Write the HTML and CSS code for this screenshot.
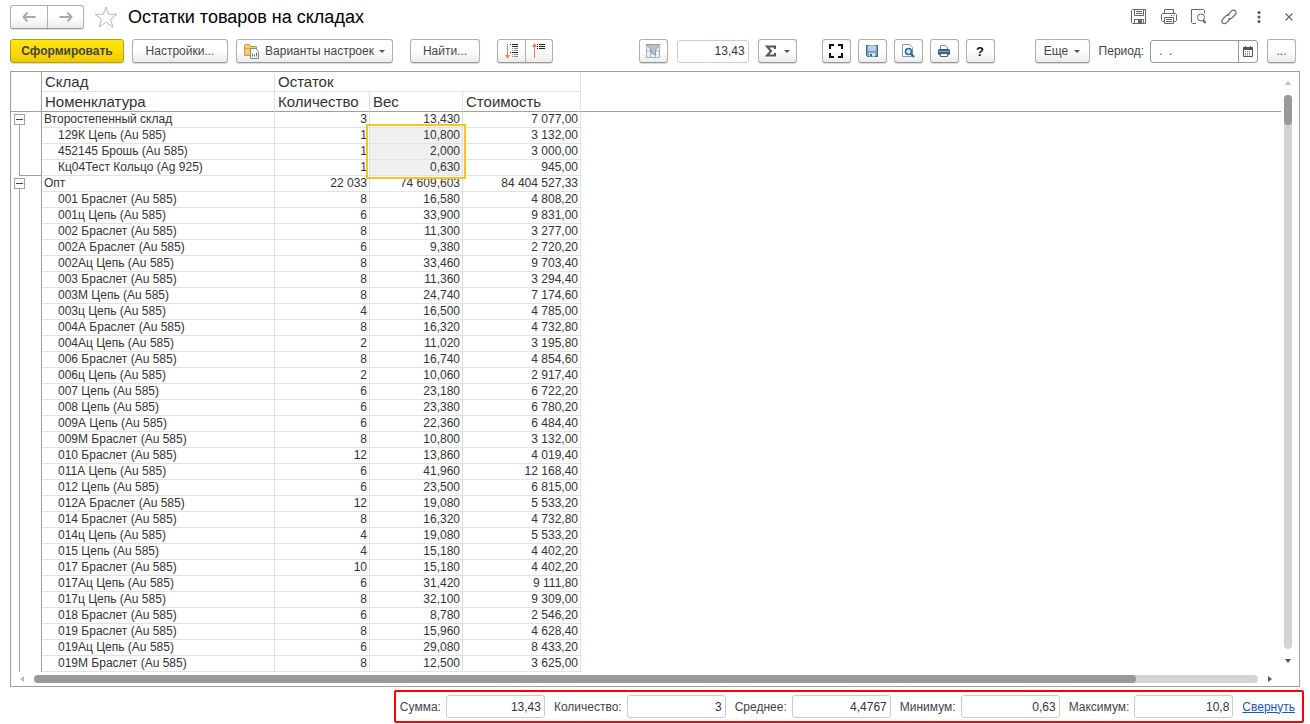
FILE: index.html
```html
<!DOCTYPE html>
<html lang="ru">
<head>
  <meta charset="UTF-8">
  <meta name="viewport" content="width=device-width, initial-scale=1.0">
  <title>Остатки товаров на складах</title>
  <link rel="stylesheet" href="styles.css">
</head>
<body>
  <div class="header">
    <div class="btn-pair nav">
      <button class="btn" type="button" aria-label="Назад">
        <svg width="14" height="10" viewBox="0 0 14 10"><path d="M5.500 0.500L1.500 5l4 4.500M2 5h11.500" fill="none" stroke="#aaa" stroke-width="2"/></svg>
      </button>
      <button class="btn" type="button" aria-label="Вперед">
        <svg width="14" height="10" viewBox="0 0 14 10"><path d="M8.500 0.500l4 4.500-4 4.500M12 5H0.500" fill="none" stroke="#aaa" stroke-width="2"/></svg>
      </button>
    </div>
    <button class="icon-btn star" type="button" aria-label="Избранное">
      <svg width="24" height="22" viewBox="0 0 24 22"><path d="M12 1l2.700 7.300H23l-6.600 4.900 2.500 7.800-6.900-4.800L5.100 21l2.500-7.800L1 8.300h8.300z" fill="none" stroke="#b4bac2"/></svg>
    </button>
    <h1>Остатки товаров на складах</h1>
    <div class="window-tools">
      <button class="icon-btn" type="button" aria-label="Сохранить">
        <svg width="16" height="16" viewBox="0 0 16 16" fill="none" stroke="#666"><path d="M0.500 1.500l1-1h13v14h-13l-1-1z"/><path d="M3.500 0.500v6h9v-6M5 2.500h6M5 4.500h6M3.500 14.500v-4h9v4"/><path d="M7 11h4v3H7z" fill="#666" stroke="none"/></svg>
      </button>
      <button class="icon-btn" type="button" aria-label="Печать">
        <svg width="16" height="16" viewBox="0 0 16 16" fill="none" stroke="#666"><path d="M3.500 4V0.500h9V4M3.500 12.500h-2l-1-1v-6l1-1h13l1 1v6l-1 1h-2"/><path d="M3.500 8.500h9v6h-9zM5 10.500h6M5 12.500h6M10 6.500h1M12.500 6.500h1"/></svg>
      </button>
      <button class="icon-btn" type="button" aria-label="Предварительный просмотр">
        <svg width="16" height="16" viewBox="0 0 16 16" fill="none" stroke="#666"><path d="M5 14.500H1.500l-1-1v-13h12l1 1v3"/><circle cx="10" cy="8.500" r="3.500"/><path d="M12 11l2.500 3" stroke-width="2"/></svg>
      </button>
      <button class="icon-btn" type="button" aria-label="Получить ссылку">
        <svg width="16" height="16" viewBox="0 0 16 16" fill="none" stroke="#666" stroke-width="1.200"><path d="M6.300 6.300l4.400-4.400a2.500 2.500 0 0 1 3.600 0 2.500 2.500 0 0 1 0 3.600L10.700 9.100a2.600 2.600 0 0 1-3.300 0.300"/><path d="M9.500 9.500l-4.300 4.300a2.500 2.500 0 0 1-3.600 0 2.500 2.500 0 0 1 0-3.600L5.200 6.600a2.600 2.600 0 0 1 3.300-0.300"/></svg>
      </button>
      <button class="icon-btn" type="button" aria-label="Меню">
        <svg width="16" height="16" viewBox="0 0 16 16" fill="#555"><circle cx="8" cy="3.500" r="1.500"/><circle cx="8" cy="8" r="1.500"/><circle cx="8" cy="12.500" r="1.500"/></svg>
      </button>
      <button class="icon-btn" type="button" aria-label="Закрыть">
        <svg width="16" height="16" viewBox="0 0 16 16"><path d="M4.500 4.500l7 7M11.500 4.500l-7 7" stroke="#666" stroke-width="1.200"/></svg>
      </button>
    </div>
  </div>

  <div class="toolbar">
    <div class="group">
      <button class="btn btn-primary" type="button">Сформировать</button>
      <button class="btn btn-settings" type="button">Настройки...</button>
      <button class="btn btn-variants" type="button">
        <svg width="16" height="16" viewBox="0 0 16 16"><path d="M0.500 12.500v-10l1-1h4l1 2h6v9z" fill="#f4cd70" stroke="#c79a35"/><path d="M1 5.500h11" stroke="#d8ab48"/><path d="M6.500 5.500h5l3 3v7h-8z" fill="#fff" stroke="#808890"/><path d="M8.500 13.500v-3" stroke="#4b8b43"/><path d="M10.500 13.500v-2" stroke="#3c70b5"/><path d="M12.500 13.500v-4" stroke="#d6492f"/></svg>
        <span>Варианты настроек</span>
        <i class="caret"></i>
      </button>
    </div>
    <button class="btn btn-find" type="button">Найти...</button>
    <div class="btn-pair sort">
      <button class="btn" type="button" aria-label="Развернуть группы">
        <svg width="14" height="16" viewBox="0 0 14 16"><path d="M2.500 1v13" stroke="#f08040"/><path d="M0 12h5l-2.500 3.500z" fill="#f08040"/><path d="M5 1.500h1M7 1.500h6M5 9.500h1M7 9.500h6M7 3.500h6" stroke="#222"/><path d="M7 5.500h1M9 5.500h4M7 7.500h1M9 7.500h4M7 11.500h1M9 11.500h4M7 13.500h1M9 13.500h4" stroke="#888"/></svg>
      </button>
      <button class="btn" type="button" aria-label="Свернуть группы">
        <svg width="14" height="16" viewBox="0 0 14 16"><path d="M2.500 2v13" stroke="#f08040"/><path d="M0 4h5L2.500 0z" fill="#f08040"/><path d="M5 1.500h1M7 1.500h6M5 3.500h1M7 3.500h6M5 5.500h1M7 5.500h6" stroke="#222"/></svg>
      </button>
    </div>
    <div class="group calc">
      <button class="btn btn-square" type="button" aria-label="Отбор">
        <svg width="16" height="16" viewBox="0 0 16 16"><path d="M1.500 3.500h13v11h-13zM1.500 8h13M5.500 3.500v11M10.500 3.500v11" fill="#eef1f4" stroke="#a9b3bd"/><path d="M1 1.500h14L10.500 7v5L6.500 10V7z" fill="#b7c2cd" stroke="#909eac"/></svg>
      </button>
      <input class="field sum-field" type="text" value="13,43" aria-label="Сумма выделенных">
      <button class="btn btn-sigma" type="button" aria-label="Функции расчета">
        <svg width="12" height="12" viewBox="0 0 12 12"><path d="M10 4V1.500H2L6 6l-4 4.500h8V8" fill="none" stroke="#555" stroke-width="2"/></svg>
        <i class="caret"></i>
      </button>
    </div>
    <div class="group actions">
      <button class="btn btn-square" type="button" aria-label="На весь экран">
        <svg width="14" height="14" viewBox="0 0 14 14"><path d="M1 5V1h4M9 1h4v4M13 9v4H9M5 13H1V9" fill="none" stroke="#111" stroke-width="2"/></svg>
      </button>
      <button class="btn btn-square" type="button" aria-label="Сохранить отчет">
        <svg width="14" height="14" viewBox="0 0 14 14"><path d="M1.500 1.500h11v11h-10l-1-1z" fill="#78a2cc" stroke="#38658f"/><path d="M3.500 1.500h7v5h-7z" fill="#f4f8fb"/><path d="M4 3h6M4 5h6" stroke="#8ba8c4"/><path d="M4 9h6v3.500H4z" fill="#dce8f2"/><path d="M5 10h2v2.500H5z" fill="#38658f"/></svg>
      </button>
      <button class="btn btn-square" type="button" aria-label="Просмотр">
        <svg width="14" height="14" viewBox="0 0 14 14"><path d="M1.500 0.500h7l3 3v9h-10z" fill="#fff" stroke="#8b969f"/><circle cx="7.500" cy="7.500" r="3" fill="#d9eaf7" stroke="#246a9e" stroke-width="1.600"/><path d="M9.700 9.700l3.300 3.300" stroke="#246a9e" stroke-width="2"/></svg>
      </button>
      <button class="btn btn-square" type="button" aria-label="Печать отчета">
        <svg width="14" height="14" viewBox="0 0 14 14"><path d="M3.500 5.500v-4h5l2 2v2" fill="#fff" stroke="#7d8b99"/><rect x="1" y="5" width="12" height="6" rx="1.500" fill="#416181"/><path d="M2 7.500h10" stroke="#89a5bf"/><path d="M3.500 9.500h7v3h-7z" fill="#fff" stroke="#416181"/></svg>
      </button>
      <button class="btn btn-square btn-help" type="button" aria-label="Справка">?</button>
    </div>
    <div class="group period">
      <button class="btn btn-more" type="button"><span>Еще</span><i class="caret"></i></button>
      <label for="period">Период:</label>
      <div class="date-field">
        <input id="period" type="text" value=".  .">
        <button type="button" aria-label="Выбрать период">
          <svg width="10" height="11" viewBox="0 0 10 11"><path d="M0.500 1.500h9v9h-9z" fill="#fff" stroke="#555"/><path d="M0 1h10v3H0zM2 0h1v1H2zM7 0h1v1H7z" fill="#555"/><path d="M2 5.500h6M2 7.500h6M2 9h6" stroke="#777" stroke-dasharray="1 1"/></svg>
        </button>
      </div>
      <button class="btn btn-square btn-dots" type="button" aria-label="Выбрать вариант периода">...</button>
    </div>
  </div>

  <div class="report">
    <div class="sheet">
      <table>
        <colgroup>
          <col class="col-tree"><col class="col-name"><col class="col-qty"><col class="col-weight"><col class="col-cost"><col>
        </colgroup>
        <thead>
          <tr><td class="tree"></td><th>Склад</th><th colspan="3">Остаток</th><td class="rest"></td></tr>
          <tr><td class="tree"></td><th>Номенклатура</th><th>Количество</th><th>Вес</th><th>Стоимость</th><td class="rest"></td></tr>
        </thead>
        <tbody>
          <tr class="total"><td class="tree"><div class="node"><button type="button" aria-label="Свернуть группу"></button></div></td><td>Второстепенный склад</td><td>3</td><td>13,430</td><td>7 077,00</td></tr>
          <tr><td class="tree"><div class="line"></div></td><td>129К Цепь (Au 585)</td><td>1</td><td class="selected">10,800<span class="selection"></span></td><td>3 132,00</td></tr>
          <tr><td class="tree"><div class="line"></div></td><td>452145 Брошь (Au 585)</td><td>1</td><td class="selected">2,000</td><td>3 000,00</td></tr>
          <tr><td class="tree"><div class="line line-end"></div></td><td>Кц04Тест Кольцо (Ag 925)</td><td>1</td><td class="selected">0,630</td><td>945,00</td></tr>
          <tr class="total"><td class="tree"><div class="node"><button type="button" aria-label="Свернуть группу"></button></div></td><td>Опт</td><td>22 033</td><td>74 609,603</td><td>84 404 527,33</td></tr>
          <tr><td class="tree"><div class="line"></div></td><td>001 Браслет (Au 585)</td><td>8</td><td>16,580</td><td>4 808,20</td></tr>
          <tr><td class="tree"><div class="line"></div></td><td>001ц Цепь (Au 585)</td><td>6</td><td>33,900</td><td>9 831,00</td></tr>
          <tr><td class="tree"><div class="line"></div></td><td>002 Браслет (Au 585)</td><td>8</td><td>11,300</td><td>3 277,00</td></tr>
          <tr><td class="tree"><div class="line"></div></td><td>002А Браслет (Au 585)</td><td>6</td><td>9,380</td><td>2 720,20</td></tr>
          <tr><td class="tree"><div class="line"></div></td><td>002Ац Цепь (Au 585)</td><td>8</td><td>33,460</td><td>9 703,40</td></tr>
          <tr><td class="tree"><div class="line"></div></td><td>003 Браслет (Au 585)</td><td>8</td><td>11,360</td><td>3 294,40</td></tr>
          <tr><td class="tree"><div class="line"></div></td><td>003М Цепь (Au 585)</td><td>8</td><td>24,740</td><td>7 174,60</td></tr>
          <tr><td class="tree"><div class="line"></div></td><td>003ц Цепь (Au 585)</td><td>4</td><td>16,500</td><td>4 785,00</td></tr>
          <tr><td class="tree"><div class="line"></div></td><td>004А Браслет (Au 585)</td><td>8</td><td>16,320</td><td>4 732,80</td></tr>
          <tr><td class="tree"><div class="line"></div></td><td>004Ац Цепь (Au 585)</td><td>2</td><td>11,020</td><td>3 195,80</td></tr>
          <tr><td class="tree"><div class="line"></div></td><td>006 Браслет (Au 585)</td><td>8</td><td>16,740</td><td>4 854,60</td></tr>
          <tr><td class="tree"><div class="line"></div></td><td>006ц Цепь (Au 585)</td><td>2</td><td>10,060</td><td>2 917,40</td></tr>
          <tr><td class="tree"><div class="line"></div></td><td>007 Цепь (Au 585)</td><td>6</td><td>23,180</td><td>6 722,20</td></tr>
          <tr><td class="tree"><div class="line"></div></td><td>008 Цепь (Au 585)</td><td>6</td><td>23,380</td><td>6 780,20</td></tr>
          <tr><td class="tree"><div class="line"></div></td><td>009А Цепь (Au 585)</td><td>6</td><td>22,360</td><td>6 484,40</td></tr>
          <tr><td class="tree"><div class="line"></div></td><td>009М Браслет (Au 585)</td><td>8</td><td>10,800</td><td>3 132,00</td></tr>
          <tr><td class="tree"><div class="line"></div></td><td>010 Браслет (Au 585)</td><td>12</td><td>13,860</td><td>4 019,40</td></tr>
          <tr><td class="tree"><div class="line"></div></td><td>011А Цепь (Au 585)</td><td>6</td><td>41,960</td><td>12 168,40</td></tr>
          <tr><td class="tree"><div class="line"></div></td><td>012 Цепь (Au 585)</td><td>6</td><td>23,500</td><td>6 815,00</td></tr>
          <tr><td class="tree"><div class="line"></div></td><td>012А Браслет (Au 585)</td><td>12</td><td>19,080</td><td>5 533,20</td></tr>
          <tr><td class="tree"><div class="line"></div></td><td>014 Браслет (Au 585)</td><td>8</td><td>16,320</td><td>4 732,80</td></tr>
          <tr><td class="tree"><div class="line"></div></td><td>014ц Цепь (Au 585)</td><td>4</td><td>19,080</td><td>5 533,20</td></tr>
          <tr><td class="tree"><div class="line"></div></td><td>015 Цепь (Au 585)</td><td>4</td><td>15,180</td><td>4 402,20</td></tr>
          <tr><td class="tree"><div class="line"></div></td><td>017 Браслет (Au 585)</td><td>10</td><td>15,180</td><td>4 402,20</td></tr>
          <tr><td class="tree"><div class="line"></div></td><td>017Ац Цепь (Au 585)</td><td>6</td><td>31,420</td><td>9 111,80</td></tr>
          <tr><td class="tree"><div class="line"></div></td><td>017ц Цепь (Au 585)</td><td>8</td><td>32,100</td><td>9 309,00</td></tr>
          <tr><td class="tree"><div class="line"></div></td><td>018 Браслет (Au 585)</td><td>6</td><td>8,780</td><td>2 546,20</td></tr>
          <tr><td class="tree"><div class="line"></div></td><td>019 Браслет (Au 585)</td><td>8</td><td>15,960</td><td>4 628,40</td></tr>
          <tr><td class="tree"><div class="line"></div></td><td>019Ац Цепь (Au 585)</td><td>6</td><td>29,080</td><td>8 433,20</td></tr>
          <tr><td class="tree"><div class="line"></div></td><td>019М Браслет (Au 585)</td><td>8</td><td>12,500</td><td>3 625,00</td></tr>
        </tbody>
      </table>
      <div class="scroll-v">
        <i class="arrow arrow-up"></i>
        <div class="track"><div class="thumb"></div></div>
        <i class="arrow arrow-down"></i>
      </div>
    </div>
    <div class="scroll-h">
      <i class="arrow arrow-left"></i>
      <div class="track"><div class="thumb"></div></div>
      <i class="arrow arrow-right"></i>
    </div>
  </div>

  <div class="totals">
    <label for="sum">Сумма:</label>
    <input class="field" id="sum" type="text" value="13,43">
    <label for="count">Количество:</label>
    <input class="field" id="count" type="text" value="3">
    <label for="avg">Среднее:</label>
    <input class="field" id="avg" type="text" value="4,4767">
    <label for="min">Минимум:</label>
    <input class="field" id="min" type="text" value="0,63">
    <label for="max">Максимум:</label>
    <input class="field" id="max" type="text" value="10,8">
    <a href="#">Свернуть</a>
  </div>
</body>
</html>
```

FILE: styles.css
```css
* {
  box-sizing: border-box;
}

body {
  margin: 0;
  background-color: #fff;
  font-family: "Liberation Sans", Arial, sans-serif;
  font-size: 12px;
  color: #444;
}

button,
input {
  font-family: inherit;
  font-size: inherit;
  color: inherit;
}

svg {
  display: block;
  flex: none;
}

/* header */
.header {
  display: flex;
  align-items: center;
  height: 34px;
  padding: 0 13px 0 10px;
}

.header h1 {
  margin: 0 0 0 10px;
  font-size: 18px;
  font-weight: normal;
  color: #000;
}

.icon-btn {
  padding: 0;
  border: none;
  background: none;
}

.star {
  margin-left: 10px;
}

.window-tools {
  display: flex;
  gap: 14px;
  margin-left: auto;
}

/* buttons */
.btn {
  display: flex;
  align-items: center;
  justify-content: center;
  height: 24px;
  padding: 0;
  border: 1px solid #b0b0b0;
  border-bottom-color: #999;
  border-radius: 3px;
  background: linear-gradient(#fff 50%, #ebebeb);
  box-shadow: 0 1px 1px rgba(0, 0, 0, 0.15);
  white-space: nowrap;
}

.btn-pair {
  display: flex;
}

.btn-pair .btn:first-child {
  border-radius: 3px 0 0 3px;
}

.btn-pair .btn:last-child {
  margin-left: -1px;
  border-radius: 0 3px 3px 0;
}

.nav .btn {
  width: 37px;
}

.nav .btn:first-child {
  width: 38px;
}

.sort .btn {
  width: 28px;
}

.sort .btn:first-child {
  width: 29px;
}

.btn-primary {
  width: 114px;
  border-color: #b8a000;
  background: linear-gradient(#ffe619, #f8d800 60%, #ecc900);
  font-weight: bold;
}

.btn-settings {
  width: 96px;
}

.btn-variants {
  gap: 5px;
  width: 157px;
}

.btn-find {
  width: 70px;
}

.btn-square {
  width: 29px;
}

.btn-sigma {
  gap: 7px;
  width: 39px;
}

.btn-more {
  gap: 6px;
  width: 55px;
}

.btn-help {
  font-size: 13px;
  font-weight: bold;
  color: #111;
}

.caret {
  border: 3px solid transparent;
  border-top-color: #555;
  border-bottom: none;
}

/* toolbar */
.toolbar {
  display: flex;
  align-items: center;
  gap: 17px;
  padding: 5px 14px 8px 10px;
}

.group {
  display: flex;
  align-items: center;
  gap: 8px;
}

.calc {
  gap: 9px;
  margin-left: auto;
}

.actions {
  margin-left: 8px;
  gap: 7px;
}

.period {
  margin-left: 23px;
  gap: 9px;
}

.period label {
  margin-right: -3px;
}

.field {
  height: 23px;
  padding: 0 3px;
  border: 1px solid #ccc;
  border-radius: 3px;
  background-color: #fff;
  color: #333;
  text-align: right;
}

.sum-field {
  width: 72px;
}

.date-field {
  display: flex;
  width: 108px;
  height: 23px;
  border: 1px solid #999;
  border-radius: 3px;
}

.date-field input {
  flex: 1;
  min-width: 0;
  padding: 0 8px;
  border: none;
  background: none;
}

.date-field button {
  display: flex;
  align-items: center;
  justify-content: center;
  width: 19px;
  padding: 0;
  border: none;
  border-left: 1px solid #999;
  background: none;
}

/* report */
.report {
  margin: 0 10px;
  border: 1px solid #a0a0a0;
}

.sheet {
  display: flex;
}

table {
  flex: 1;
  table-layout: fixed;
  border-collapse: separate;
  border-spacing: 0;
  color: #333;
}

.col-tree {
  width: 31px;
}

.col-name {
  width: 233px;
}

.col-qty {
  width: 95px;
}

.col-weight {
  width: 93px;
}

.col-cost {
  width: 118px;
}

th,
td {
  height: 16px;
  padding: 0 2px;
  border-right: 1px solid #e2e2e2;
  border-bottom: 1px solid #e2e2e2;
  line-height: 15px;
  text-align: right;
  white-space: nowrap;
}

th {
  height: 20px;
  padding: 0 3px;
  font-size: 15px;
  font-weight: normal;
  line-height: 19px;
  text-align: left;
}

thead tr:last-child > * {
  border-bottom-color: #a0a0a0;
}

td:nth-child(2) {
  padding-left: 16px;
  text-align: left;
}

.total td:nth-child(2) {
  padding-left: 2px;
}

.tree {
  padding: 0;
  border-right-color: #a0a0a0;
  border-bottom: none;
}

thead tr:last-child .tree {
  border-bottom: 1px solid #a0a0a0;
}

thead .rest {
  border-right: none;
}

thead tr:first-child .rest {
  border-bottom: none;
}

.line {
  height: 16px;
  margin-left: 8px;
  border-left: 1px solid #a0a0a0;
}

.line-end {
  border-bottom: 1px solid #a0a0a0;
}

.node {
  display: flex;
  flex-direction: column;
  width: 11px;
  height: 16px;
  margin-left: 3px;
  padding-top: 2px;
}

.node button {
  display: block;
  width: 11px;
  height: 11px;
  padding: 0;
  border: 1px solid #a0a0a0;
  background: linear-gradient(#444, #444) center / 7px 1px no-repeat;
}

.node::after {
  content: '';
  width: 1px;
  flex: 1;
  margin-left: 5px;
  background-color: #a0a0a0;
}

.selected {
  position: relative;
  background-color: #f0f0f0;
}

.selection {
  position: absolute;
  z-index: 1;
  top: -4px;
  left: -4px;
  right: -4px;
  height: calc(300% + 10px);
  border: 2px solid #fac31e;
}

/* scrollbars */
.scroll-v {
  display: flex;
  flex-direction: column;
  align-items: center;
  width: 18px;
  padding: 9px 5px 9px 0;
}

.scroll-v .track {
  flex: 1;
  width: 8px;
  margin: 10px 0;
}

.scroll-v .thumb {
  height: 30px;
}

.track {
  border-radius: 4px;
  background-color: #d4d4d4;
}

.thumb {
  border-radius: 4px;
  background-color: #999;
}

.scroll-h {
  display: flex;
  align-items: center;
  height: 14px;
  padding: 0 27px 0 9px;
}

.scroll-h .track {
  flex: 1;
  margin: 0 10px;
}

.scroll-h .thumb {
  width: 90%;
  height: 8px;
}

.arrow {
  border: 3px solid transparent;
}

.arrow-up {
  border-top: none;
  border-bottom: 4px solid #bbb;
}

.arrow-down {
  border-bottom: none;
  border-top: 4px solid #555;
}

.arrow-left {
  border-left: none;
  border-right: 4px solid #bbb;
}

.arrow-right {
  border-right: none;
  border-left: 4px solid #555;
}

/* totals */
.totals {
  display: flex;
  align-items: center;
  gap: 5px;
  width: fit-content;
  margin: 3px 6px 0 auto;
  padding: 3px 7px 3px 4px;
  border: 2px solid #f00;
  border-radius: 2px;
}

.totals .field {
  width: 99px;
  margin-right: 4px;
}

.totals a {
  color: #1a57b8;
}
```
